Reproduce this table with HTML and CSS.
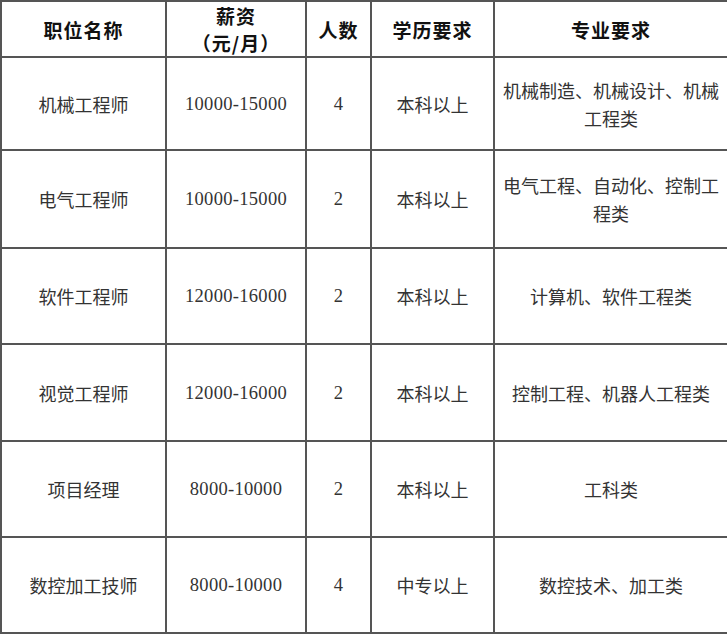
FILE: index.html
```html
<!DOCTYPE html>
<html lang="zh">
<head>
<meta charset="utf-8">
<title>招聘岗位</title>
<link rel="stylesheet" href="styles.css">
</head>
<body>
<table class="jobs">
  <colgroup>
    <col class="c-name">
    <col class="c-pay">
    <col class="c-num">
    <col class="c-edu">
    <col class="c-major">
  </colgroup>
  <thead>
    <tr class="head-row">
      <th>职位名称</th>
      <th>薪资<br>（元/月）</th>
      <th>人数</th>
      <th>学历要求</th>
      <th>专业要求</th>
    </tr>
  </thead>
  <tbody>
    <tr class="row row-short">
      <td>机械工程师</td>
      <td class="num">10000-15000</td>
      <td class="num">4</td>
      <td>本科以上</td>
      <td>机械制造、机械设计、机械工程类</td>
    </tr>
    <tr class="row row-tall">
      <td>电气工程师</td>
      <td class="num">10000-15000</td>
      <td class="num">2</td>
      <td>本科以上</td>
      <td>电气工程、自动化、控制工程类</td>
    </tr>
    <tr class="row">
      <td>软件工程师</td>
      <td class="num">12000-16000</td>
      <td class="num">2</td>
      <td>本科以上</td>
      <td>计算机、软件工程类</td>
    </tr>
    <tr class="row row-mid">
      <td>视觉工程师</td>
      <td class="num">12000-16000</td>
      <td class="num">2</td>
      <td>本科以上</td>
      <td>控制工程、机器人工程类</td>
    </tr>
    <tr class="row">
      <td>项目经理</td>
      <td class="num">8000-10000</td>
      <td class="num">2</td>
      <td>本科以上</td>
      <td>工科类</td>
    </tr>
    <tr class="row">
      <td>数控加工技师</td>
      <td class="num">8000-10000</td>
      <td class="num">4</td>
      <td>中专以上</td>
      <td>数控技术、加工类</td>
    </tr>
  </tbody>
</table>
</body>
</html>
```
FILE: styles.css
```css
html, body {
  margin: 0;
  padding: 0;
  background: #ffffff;
}

.jobs {
  border-collapse: collapse;
  table-layout: fixed;
  width: 727px;
  font-family: "Liberation Serif", "Noto Sans CJK SC", serif;
  color: #333333;
}

.c-name { width: 165px; }
.c-pay { width: 140px; }
.c-num { width: 65px; }
.c-edu { width: 123px; }
.c-major { width: 234px; }

.jobs th,
.jobs td {
  border: 2px solid #555555;
  padding: 0 4px;
  text-align: center;
  vertical-align: middle;
  line-height: 28px;
}

.jobs th {
  font-family: "Noto Sans CJK SC", sans-serif;
  font-weight: 700;
  font-size: 19px;
  color: #111111;
  letter-spacing: 1px;
  line-height: 27px;
}

.jobs td {
  font-family: "Noto Sans CJK SC", sans-serif;
  font-weight: 400;
  font-size: 18px;
}

.jobs td.num {
  font-family: "Liberation Serif", serif;
  font-size: 18.5px;
  letter-spacing: 0.3px;
}

.head-row { height: 56px; }
.row { height: 96px; }
.row-short { height: 93px; }
.row-tall { height: 98px; }
.row-mid { height: 97px; }
```
